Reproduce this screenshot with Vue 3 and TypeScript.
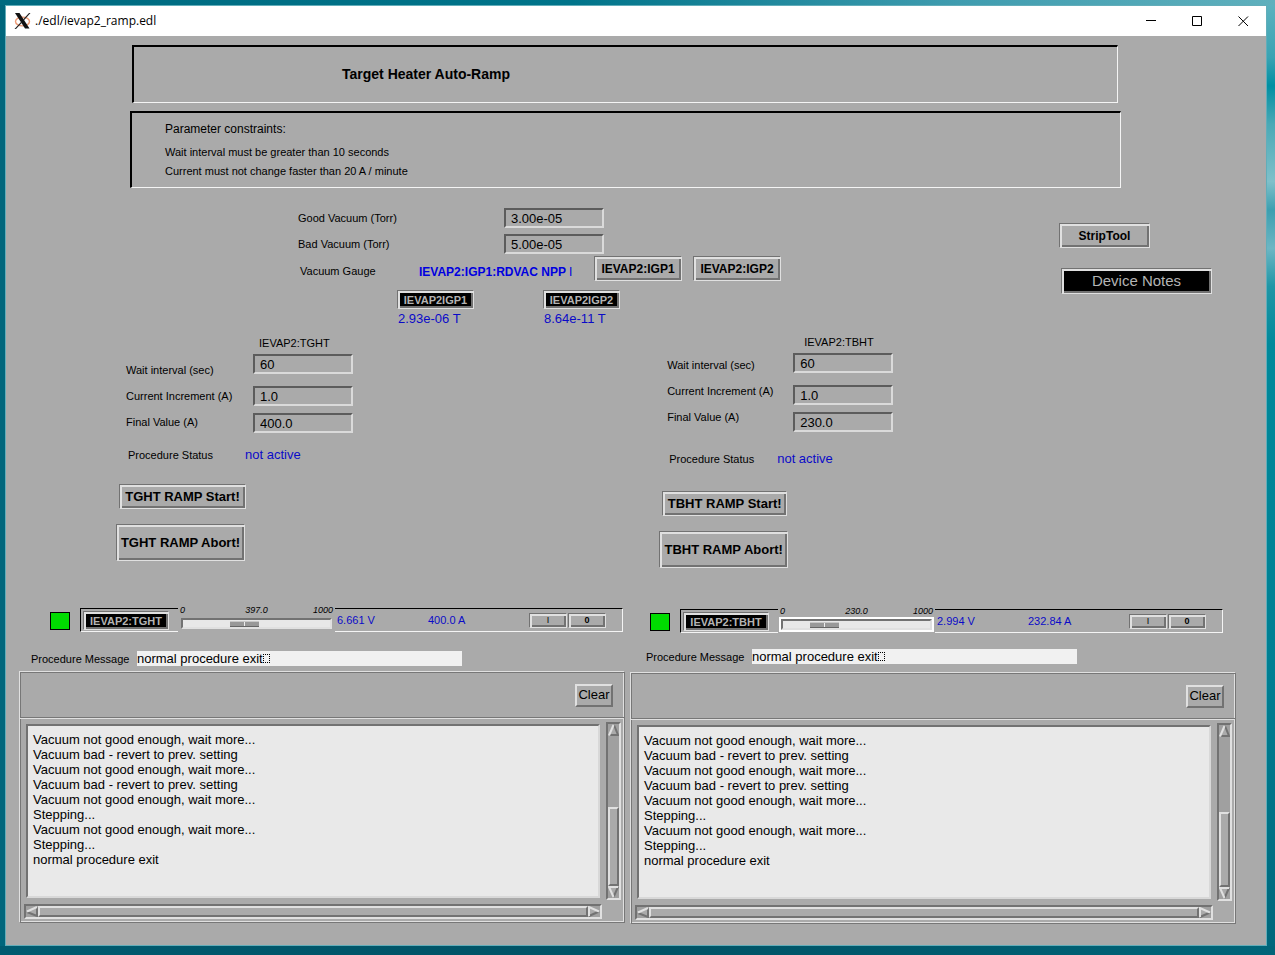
<script setup lang="ts">
import { reactive } from 'vue'

interface Heater {
  id: string
  name: string
  wait: string
  increment: string
  final: string
  status: string
  setpoint: number
  setpointText: string
  volts: string
  amps: string
  message: string
  scrollTop: number
  log: string
}

const log = [
  'Vacuum not good enough, wait more...',
  'Vacuum bad - revert to prev. setting',
  'Vacuum not good enough, wait more...',
  'Vacuum bad - revert to prev. setting',
  'Vacuum not good enough, wait more...',
  'Stepping...',
  'Vacuum not good enough, wait more...',
  'Stepping...',
  'normal procedure exit',
].join('\n')

const vacuum = reactive({ good: '3.00e-05', bad: '5.00e-05' })

const heaters = reactive<Heater[]>([
  {
    id: 'tght', name: 'TGHT', wait: '60', increment: '1.0', final: '400.0', status: 'not active',
    setpoint: 397, setpointText: '397.0', volts: '6.661 V', amps: '400.0 A',
    message: 'normal procedure exit', scrollTop: 71, log,
  },
  {
    id: 'tbht', name: 'TBHT', wait: '60', increment: '1.0', final: '230.0', status: 'not active',
    setpoint: 230, setpointText: '230.0', volts: '2.994 V', amps: '232.84 A',
    message: 'normal procedure exit', scrollTop: 75, log,
  },
])
</script>

<template>
  <div class="desktop">
    <div class="window">
      <header class="titlebar">
        <svg class="logo" viewBox="0 0 18 16" width="18" height="16" aria-hidden="true">
          <ellipse cx="8.5" cy="8.5" rx="7" ry="4.4" fill="none" stroke="#ee9a74" stroke-width="1.4" />
          <path d="M1 0H5.5L15.5 15.5H11Z" fill="#111" />
          <path d="M15 0H16.5L9.8 7.6L9 6.6Z M7.4 8.4L8.2 9.6L2 16H.5Z" fill="#222" />
        </svg>
        <h1>./edl/ievap2_ramp.edl</h1>
        <div class="controls">
          <button type="button" aria-label="Minimize">
            <svg viewBox="0 0 11 11" width="11" height="11"><path d="M0 4.5H10" /></svg>
          </button>
          <button type="button" aria-label="Maximize">
            <svg viewBox="0 0 11 11" width="11" height="11"><path d="M.5 .5H9.5V9.5H.5Z" /></svg>
          </button>
          <button type="button" aria-label="Close">
            <svg viewBox="0 0 11 11" width="11" height="11"><path d="M.5 .5L10 10M10 .5L.5 10" /></svg>
          </button>
        </div>
      </header>

      <main>
        <section class="sunken heading"><h2>Target Heater Auto-Ramp</h2></section>
        <section class="sunken constraints">
          <h3>Parameter constraints:</h3>
          <p>Wait interval must be greater than 10 seconds</p>
          <p>Current must not change faster than 20 A / minute</p>
        </section>

        <section class="vacuum">
          <div class="gauges">
            <div class="vrow">
              <label for="good">Good Vacuum (Torr)</label>
              <input id="good" v-model="vacuum.good" class="field" type="text" />
            </div>
            <div class="vrow">
              <label for="bad">Bad Vacuum (Torr)</label>
              <input id="bad" v-model="vacuum.bad" class="field" type="text" />
            </div>
            <div class="grow">
              <span class="gname">Vacuum Gauge</span>
              <span class="channel">IEVAP2:IGP1:RDVAC NPP <span class="cut">I</span></span>
              <button type="button" class="btn pick">IEVAP2:IGP1</button>
              <button type="button" class="btn pick">IEVAP2:IGP2</button>
            </div>
            <div class="readouts">
              <div class="readout">
                <button type="button" class="btn dark tile">IEVAP2IGP1</button>
                <output>2.93e-06 T</output>
              </div>
              <div class="readout">
                <button type="button" class="btn dark tile">IEVAP2IGP2</button>
                <output>8.64e-11 T</output>
              </div>
            </div>
          </div>
          <div class="tools">
            <button type="button" class="btn strip-tool">StripTool</button>
            <button type="button" class="btn dark notes">Device Notes</button>
          </div>
        </section>

        <section class="ramps">
          <div v-for="h in heaters" :key="h.id" class="ramp" :class="h.id">
            <div class="params">
              <div class="names">
                <label :for="h.id + '-wait'">Wait interval (sec)</label>
                <label :for="h.id + '-inc'">Current Increment (A)</label>
                <label :for="h.id + '-final'">Final Value (A)</label>
              </div>
              <div class="values">
                <h3>IEVAP2:{{ h.name }}</h3>
                <input :id="h.id + '-wait'" v-model="h.wait" class="field" type="text" />
                <input :id="h.id + '-inc'" v-model="h.increment" class="field" type="text" />
                <input :id="h.id + '-final'" v-model="h.final" class="field" type="text" />
              </div>
            </div>
            <div class="status"><span>Procedure Status</span><output>{{ h.status }}</output></div>
            <button type="button" class="btn start">{{ h.name }} RAMP Start!</button>
            <button type="button" class="btn abort">{{ h.name }} RAMP Abort!</button>
          </div>
        </section>

        <section class="channels">
          <div v-for="h in heaters" :key="h.id" class="device" :class="h.id">
            <div class="supply">
              <span class="lamp"></span>
              <div class="seg first"><button type="button" class="btn dark device-name">IEVAP2:{{ h.name }}</button></div>
              <div class="slider">
                <div class="scale"><span>0</span><label :for="h.id + '-set'">{{ h.setpointText }}</label><span>1000</span></div>
                <input :id="h.id + '-set'" v-model.number="h.setpoint" type="range" min="0" max="1000" />
              </div>
              <div class="seg last">
                <output class="volts">{{ h.volts }}</output>
                <output class="amps">{{ h.amps }}</output>
                <div class="switches">
                  <button type="button" class="btn switch on">I</button>
                  <button type="button" class="btn switch">0</button>
                </div>
              </div>
            </div>

            <div class="message">
              <span>Procedure Message</span>
              <output>{{ h.message }}<i class="missing"></i></output>
            </div>

            <div class="panel">
              <div class="panel-head"><button type="button" class="clear">Clear</button></div>
              <div class="panel-body">
                <textarea :value="h.log" readonly wrap="off" aria-label="Procedure log"></textarea>
                <div class="bar vertical">
                  <button type="button" aria-label="Scroll up">
                    <svg viewBox="0 0 11 12" width="11" height="12"><path class="face" d="M5.5 0L11 12H0Z" /><path class="lo" d="M6 1L10 11H1" /><path class="hi" d="M1 11.5L5.5 1" /></svg>
                  </button>
                  <div class="track"><div class="thumb" :style="{ marginTop: h.scrollTop + 'px' }"></div></div>
                  <button type="button" aria-label="Scroll down">
                    <svg viewBox="0 0 11 12" width="11" height="12"><path class="face" d="M0 0H11L5.5 12Z" /><path class="lo" d="M10 1L5.5 11" /><path class="hi" d="M10 1H1L5.5 11" /></svg>
                  </button>
                </div>
                <div class="bar horizontal">
                  <button type="button" aria-label="Scroll left">
                    <svg viewBox="0 0 12 11" width="12" height="11"><path class="face" d="M12 0V11L0 5.5Z" /><path class="lo" d="M11 1V10L1 6" /><path class="hi" d="M11 1L1 5.5" /></svg>
                  </button>
                  <div class="track"><div class="thumb"></div></div>
                  <button type="button" aria-label="Scroll right">
                    <svg viewBox="0 0 12 11" width="12" height="11"><path class="face" d="M0 0L12 5.5L0 11Z" /><path class="lo" d="M1 10L11 5.5" /><path class="hi" d="M1 10V1L11 5.5" /></svg>
                  </button>
                </div>
              </div>
            </div>
          </div>
        </section>
      </main>
    </div>
  </div>
</template>

<style>
body {
  margin: 0;
}
</style>

<style scoped>
* {
  box-sizing: border-box;
}

.desktop {
  --face: #aaaaaa;
  --hi: #e0e0e0;
  --lo: #727272;
  --blue: #0a0ac8;
  display: flex;
  min-height: 100vh;
  padding: 5px 8px 9px 5px;
  font-family: "Liberation Sans", Arial, Helvetica, sans-serif;
  font-size: 11px;
  line-height: 14px;
  color: #000;
  background:
    linear-gradient(90deg, #006a80, #00748a 45%, #3f9caf 75%, #5fb0bd) top / 100% 5px no-repeat,
    linear-gradient(90deg, #005b70, #005265 50%, #006579) bottom / 100% 9px no-repeat,
    linear-gradient(180deg, #5fb3c0, #3aa3b3 6%, #008fa2 9%, #4aa9b6 13%, #7fc0ca 19%, #3c9fb0 22%, #6db6c4 26%, #1f96a6 30%, #00899b 36%, #007f93 70%, #00667b) right / 9px 100% no-repeat,
    #00667c;
}

.window {
  flex: 1;
  display: flex;
  flex-direction: column;
  border: 1px solid #62adb9;
  background: var(--face);
}

h1, h2, h3, p {
  margin: 0;
  font-size: inherit;
  font-weight: normal;
}

button, input, textarea {
  margin: 0;
  padding: 0;
  border: 0;
  border-radius: 0;
  color: inherit;
  font: inherit;
}

.titlebar {
  display: flex;
  align-items: center;
  height: 30px;
  padding-left: 8px;
  background: #fff;
}

.titlebar h1 {
  flex: 1;
  padding-left: 3px;
  font-family: "Open Sans", "Noto Sans", sans-serif;
  font-size: 12px;
}

.controls {
  display: flex;
}

.controls button {
  width: 46px;
  height: 30px;
  background: none;
}

.controls svg {
  display: block;
  margin: auto;
  fill: none;
  stroke: #000;
}

.sunken {
  border: 1px solid #f4f4f4;
  border-top: 2px solid #000;
  border-left: 2px solid #000;
}

.heading {
  height: 58px;
  margin: 9px 148px 0 126px;
  padding: 19px 0 0 208px;
}

.heading h2 {
  font-size: 14px;
  font-weight: bold;
  line-height: 16px;
}

.constraints {
  margin: 8px 145px 0 124px;
  padding: 8px 0 9px 33px;
}

.constraints h3 {
  margin-bottom: 8px;
  font-size: 12px;
  line-height: 16px;
}

.constraints p + p {
  margin-top: 5px;
}

.btn {
  flex: none;
  border: 1px solid var(--hi);
  border-top-color: var(--lo);
  border-left-color: var(--lo);
  box-shadow: inset 2px 2px var(--hi), inset -2px -2px var(--lo);
  background: var(--face);
  font-weight: bold;
  white-space: nowrap;
}

.dark {
  background: #000;
  color: #b4b4b4;
}

.field {
  display: block;
  width: 100px;
  height: 20px;
  padding: 0 5px;
  border: 2px solid #dadada;
  border-top-color: #5c5c5c;
  border-left-color: #5c5c5c;
  background: var(--face);
  font-size: 13px;
}

output {
  color: var(--blue);
}

.vacuum {
  display: flex;
  justify-content: space-between;
  margin-top: 20px;
  padding: 0 54px 0 292px;
}

.vrow {
  display: flex;
  align-items: center;
  margin-bottom: 6px;
}

.vrow label {
  width: 206px;
}

.grow {
  display: flex;
  height: 25px;
  margin-top: -4px;
  align-items: center;
}

.gname {
  width: 121px;
  padding: 4px 0 0 2px;
}

.channel {
  width: 175px;
  padding-top: 6px;
  color: #0000e0;
  font-size: 12px;
  font-weight: bold;
}

.cut {
  font-weight: normal;
}

.pick {
  width: 88px;
  height: 25px;
  margin-right: 11px;
  font-size: 12px;
}

.readouts {
  display: flex;
  gap: 69px;
  margin: 9px 0 0 99px;
}

.readout output {
  display: block;
  padding: 2px 0 0 1px;
  font-size: 13px;
  line-height: 16px;
}

.tile {
  display: block;
  width: 77px;
  height: 19px;
}

.tools {
  display: flex;
  flex-direction: column;
  gap: 20px;
  width: 153px;
  padding-top: 15px;
}

.strip-tool {
  width: 91px;
  height: 25px;
  font-size: 12px;
}

.notes {
  height: 26px;
  margin-left: 2px;
  font-size: 15px;
  font-weight: normal;
}

.ramps {
  display: grid;
  grid-template-columns: 8fr 9fr;
  margin-top: 8px;
  padding-left: 110px;
}

.ramp {
  display: flex;
  flex-direction: column;
  align-items: flex-start;
}

.ramp.tght {
  padding-top: 1px;
}

.params {
  display: flex;
}

.names {
  display: flex;
  flex-direction: column;
  gap: 12px;
  width: 137px;
  padding: 27px 0 0 10px;
}

.values h3 {
  margin-bottom: 4px;
  padding-left: 6px;
}

.values .field:nth-of-type(2) {
  margin: 12px 0 7px;
}

.status {
  display: flex;
  margin: 15px 0 22px;
  padding-left: 12px;
}

.status span {
  width: 117px;
}

.status output {
  font-size: 13px;
}

.start {
  width: 127px;
  height: 25px;
  margin: 0 0 15px 3px;
  font-size: 13px;
}

.abort {
  width: 129px;
  height: 37px;
  font-size: 13px;
}

.ramp.tbht .names {
  width: 136px;
  padding-top: 23px;
}

.ramp.tbht .values h3 {
  padding-left: 11px;
}

.ramp.tbht .status {
  margin: 20px 0 25px;
}

.ramp.tbht .status span {
  width: 108px;
}

.ramp.tbht .start {
  width: 125px;
  margin-left: 5px;
}

.ramp.tbht .abort {
  margin-left: 2px;
}

.channels {
  display: grid;
  grid-template-columns: 1fr 1fr;
  gap: 5px;
  margin-top: 36px;
  padding: 0 30px 21px 13px;
}

.device.tbht {
  padding-top: 1px;
}

.supply {
  display: flex;
  height: 30px;
  padding: 0 2px 0 31px;
}

.tbht .supply {
  padding: 0 13px 0 20px;
}

.lamp {
  width: 20px;
  height: 18px;
  margin: 8px 10px 0 0;
  border: 1px solid #000;
  background: #00dc00;
}

.seg {
  display: flex;
  height: 24px;
  margin-top: 4px;
  border-top: 1px solid #000;
  border-bottom: 1px solid #f4f4f4;
}

.first {
  width: 98px;
  padding: 2px 0 0 2px;
  border-left: 1px solid #000;
}

.device-name {
  width: 86px;
  height: 19px;
}

.slider {
  width: 157px;
  padding: 0 2px;
}

.scale {
  display: flex;
  justify-content: space-between;
  height: 12px;
  font-size: 9px;
  font-style: italic;
  line-height: 12px;
}

.scale span:first-child {
  width: 20px;
}

.slider input {
  display: block;
  appearance: none;
  width: 151px;
  height: 11px;
  margin: 2px 0 0 1px;
  border: 2px solid var(--hi);
  border-top-color: var(--lo);
  border-left-color: var(--lo);
  background: #e8e8e8;
}

.tbht .slider input {
  outline: 2px solid #fff;
}

.slider input::-webkit-slider-thumb {
  appearance: none;
  width: 29px;
  height: 6px;
  border-top: 1px solid #c8c8c8;
  border-bottom: 1px solid #666;
  background: linear-gradient(90deg, #989898 14px, #eee 14px, #eee 15px, #989898 15px);
}

.last {
  flex: 1;
  padding: 4px 16px 0 2px;
  border-right: 1px solid #f4f4f4;
}

.volts {
  width: 91px;
}

.switches {
  display: flex;
  gap: 1px;
  margin-left: auto;
}

.switch {
  width: 38px;
  height: 15px;
  font-size: 9px;
  line-height: 11px;
}

.on {
  font-weight: normal;
}

.message {
  display: flex;
  align-items: center;
  height: 15px;
  margin: 17px 0 5px;
  padding-left: 12px;
}

.tbht .message {
  margin: 14px 0 8px;
  padding-left: 16px;
}

.message span {
  width: 106px;
}

.message output {
  display: flex;
  align-items: center;
  width: 325px;
  height: 15px;
  background: #f1f1f1;
  color: #000;
  font-size: 13px;
}

.missing {
  width: 7px;
  height: 9px;
  border: 1px dotted #000;
}

.panel {
  border: 1px solid #777;
  border-top-color: var(--hi);
  border-left-color: var(--hi);
  box-shadow: inset 1px 1px #777, inset -1px -1px var(--hi);
}

.panel-head {
  display: flex;
  align-items: center;
  justify-content: flex-end;
  height: 47px;
  padding-right: 11px;
  border-bottom: 1px solid var(--hi);
  box-shadow: inset 0 -1px #777;
}

.clear {
  width: 38px;
  height: 23px;
  border: 2px solid var(--lo);
  border-top-color: var(--hi);
  border-left-color: var(--hi);
  background: var(--face);
  font-size: 13px;
}

.panel-body {
  display: grid;
  grid-template-columns: 1fr 15px;
  grid-template-rows: 178px 15px;
  gap: 4px;
  padding: 3px 3px 3px 4px;
}

textarea {
  display: block;
  margin: 2px;
  padding: 6px 5px;
  border: 2px solid #d8d8d8;
  border-top-color: var(--lo);
  border-left-color: var(--lo);
  outline: 0;
  overflow: hidden;
  resize: none;
  background: #e9e9e9;
  font-size: 13px;
  line-height: 15px;
}

.bar {
  display: flex;
  border: 2px solid var(--hi);
  border-top-color: var(--lo);
  border-left-color: var(--lo);
  background: #a0a0a0;
}

.vertical {
  flex-direction: column;
}

.bar button {
  flex: none;
  background: none;
}

.bar svg {
  display: block;
}

.bar path {
  fill: none;
  stroke-width: 2;
}

.bar .face {
  fill: var(--face);
}

.bar .hi {
  stroke: var(--hi);
}

.bar .lo {
  stroke: var(--lo);
}

.track {
  flex: 1;
  display: flex;
}

.thumb {
  flex: 1;
  border: 2px solid var(--lo);
  border-top-color: var(--hi);
  border-left-color: var(--hi);
  background: var(--face);
}
</style>
